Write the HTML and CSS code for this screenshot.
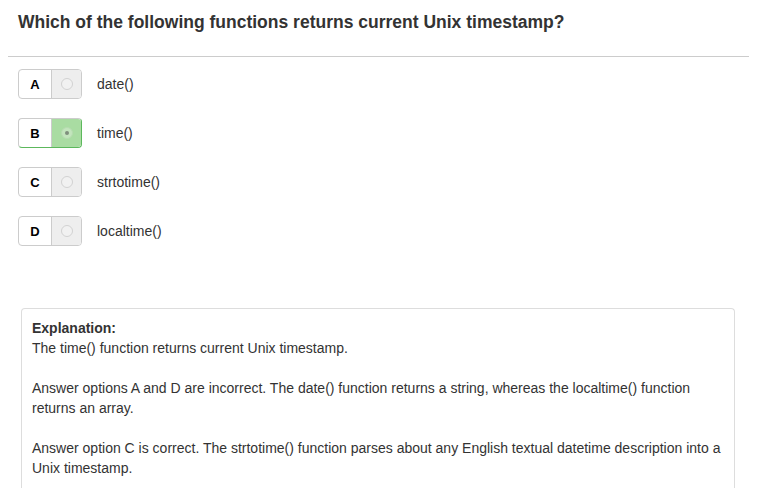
FILE: index.html
```html
<!DOCTYPE html>
<html lang="en">
<head>
<meta charset="utf-8">
<title>Question</title>
<link rel="stylesheet" href="styles.css">
</head>
<body>
<div class="page">
  <h1 class="question">Which of the following functions returns current Unix timestamp?</h1>
  <hr class="rule">
  <ul class="options">
    <li class="option">
      <span class="choice"><span class="letter">A</span><span class="radio-cell"><span class="radio"></span></span></span>
      <span class="option-text">date()</span>
    </li>
    <li class="option option--checked">
      <span class="choice"><span class="letter">B</span><span class="radio-cell radio-cell--checked"><span class="radio radio--checked"></span></span></span>
      <span class="option-text">time()</span>
    </li>
    <li class="option">
      <span class="choice"><span class="letter">C</span><span class="radio-cell"><span class="radio"></span></span></span>
      <span class="option-text">strtotime()</span>
    </li>
    <li class="option">
      <span class="choice"><span class="letter">D</span><span class="radio-cell"><span class="radio"></span></span></span>
      <span class="option-text">localtime()</span>
    </li>
  </ul>
  <div class="explanation">
    <p class="explanation-head"><strong>Explanation:</strong><br>The time() function returns current Unix timestamp.</p>
    <p>Answer options A and D are incorrect. The date() function returns a string, whereas the localtime() function returns an array.</p>
    <p>Answer option C is correct. The strtotime() function parses about any English textual datetime description into a Unix timestamp.</p>
  </div>
</div>
</body>
</html>
```

FILE: styles.css
```css
html, body {
  margin: 0;
  padding: 0;
  background: #fff;
}
body {
  font-family: "Liberation Sans", Arial, sans-serif;
  color: #333;
}
.page {
  padding: 0 8px;
}
.question {
  margin: 12px 0 0;
  padding-left: 10px;
  font-size: 17.5px;
  line-height: 20px;
  font-weight: bold;
  color: #333;
}
.rule {
  margin: 24px 0 0;
  border: 0;
  border-top: 1px solid #ccc;
  height: 0;
}
.options {
  list-style: none;
  margin: 12px 0 0;
  padding: 0 0 0 10px;
  display: flex;
  flex-direction: column;
  gap: 19px;
}
.option {
  display: flex;
  align-items: center;
  gap: 15px;
}
.choice {
  display: flex;
  height: 28px;
  border: 1px solid #ccc;
  border-radius: 4px;
  overflow: hidden;
  background: #fff;
}
.option--checked .choice {
  border-color: #ccc #5cb85c #5cb85c #ccc;
}
.letter {
  width: 32px;
  display: flex;
  align-items: center;
  justify-content: center;
  font-weight: bold;
  font-size: 13px;
  color: #000;
  border-right: 1px solid #ccc;
}
.radio-cell {
  width: 29px;
  display: flex;
  align-items: center;
  justify-content: center;
  background: #eee;
}
.radio-cell--checked {
  background: #a9dca2;
}
.radio {
  width: 12px;
  height: 12px;
  border: 1px solid #d2d2d2;
  border-radius: 50%;
  background: #f1f1f1;
  box-sizing: border-box;
  position: relative;
}
.radio--checked {
  border-color: #b6dcb0;
  background: #c3e5bd;
}
.radio--checked::after {
  content: "";
  position: absolute;
  left: 3px;
  top: 3px;
  width: 4px;
  height: 4px;
  border-radius: 50%;
  background: #7f8f7d;
}
.option-text {
  font-size: 14px;
  color: #333;
}
.explanation {
  margin: 62px 14px 0 13px;
  border: 1px solid #ddd;
  border-bottom: 0;
  border-radius: 4px 4px 0 0;
  padding: 9px 10px 10px;
  font-size: 14px;
  line-height: 20px;
  color: #333;
}
.explanation p {
  margin: 0 0 20px;
}
.explanation p:last-child {
  margin-bottom: 0;
}
.explanation strong {
  font-weight: bold;
}
```
